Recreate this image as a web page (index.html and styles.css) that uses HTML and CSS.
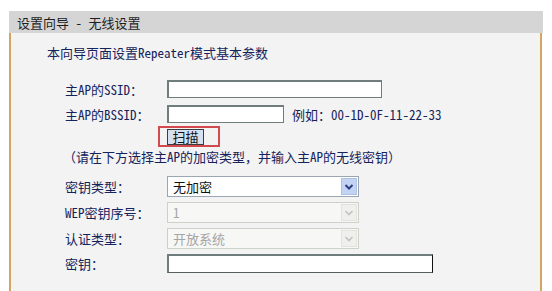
FILE: index.html
```html
<!DOCTYPE html>
<html lang="zh-CN">
<head>
    <meta charset="UTF-8">
    <meta name="viewport" content="width=device-width, initial-scale=1.0">
    <title>设置向导 - 无线设置</title>
    <link rel="stylesheet" href="styles.css">
</head>
<body>
    <div class="panel">
        <div class="panel-title">设置向导 - 无线设置</div>
        <div class="panel-body">
            <p class="intro">本向导页面设置Repeater模式基本参数</p>

            <div class="row row-input first">
                <span class="label">主AP的SSID：</span>
                <input type="text" class="text-input wide">
            </div>
            <div class="row row-input">
                <span class="label">主AP的BSSID：</span>
                <input type="text" class="text-input short">
                <span class="hint">例如：00-1D-0F-11-22-33</span>
            </div>
            <div class="row row-btn">
                <span class="label"></span>
                <span class="highlight"><button class="scan-btn">扫描</button></span>
            </div>

            <p class="note">（请在下方选择主AP的加密类型，并输入主AP的无线密钥）</p>

            <div class="row row-select first-select">
                <span class="label">密钥类型：</span>
                <div class="select">
                    <span class="select-value">无加密</span>
                    <span class="select-arrow">
                        <svg width="10" height="8" viewBox="0 0 10 8"><path d="M1.5 2 L5 5.5 L8.5 2" fill="none" stroke="currentColor" stroke-width="2"/></svg>
                    </span>
                </div>
            </div>
            <div class="row row-select">
                <span class="label">WEP密钥序号：</span>
                <div class="select disabled">
                    <span class="select-value">1</span>
                    <span class="select-arrow">
                        <svg width="10" height="8" viewBox="0 0 10 8"><path d="M1.5 2 L5 5.5 L8.5 2" fill="none" stroke="currentColor" stroke-width="1.6"/></svg>
                    </span>
                </div>
            </div>
            <div class="row row-select">
                <span class="label">认证类型：</span>
                <div class="select disabled">
                    <span class="select-value">开放系统</span>
                    <span class="select-arrow">
                        <svg width="10" height="8" viewBox="0 0 10 8"><path d="M1.5 2 L5 5.5 L8.5 2" fill="none" stroke="currentColor" stroke-width="1.6"/></svg>
                    </span>
                </div>
            </div>
            <div class="row row-key">
                <span class="label">密钥：</span>
                <input type="text" class="text-input key">
            </div>
        </div>
    </div>
</body>
</html>
```

FILE: styles.css
```css
body {
    margin: 0;
    background: #ffffff;
    font-family: "Noto Sans Mono CJK SC", "Noto Sans CJK SC", sans-serif;
    font-size: 13px;
    color: #15235c;
}
.panel {
    margin: 11px 9px 0 9px;
}
.panel-title {
    height: 22px;
    line-height: 23px;
    padding-left: 8px;
    background: #d5d5d5;
    color: #1e1e1e;
}
.panel-body {
    height: 258px;
    box-sizing: border-box;
    margin-right: 1px;
    background: #f3f3f3;
    border-left: 2px solid #d2a662;
    border-right: 2px solid #d2a662;
    padding-top: 10px;
}
.intro {
    margin: 0;
    padding-left: 36px;
    height: 20px;
    line-height: 20px;
}
.row {
    display: flex;
    align-items: center;
    padding-left: 54px;
}
.label {
    width: 102px;
    flex-shrink: 0;
    white-space: nowrap;
}
.row-input {
    height: 22px;
    margin-top: 3px;
}
.row-input.first {
    margin-top: 15px;
}
.text-input {
    box-sizing: border-box;
    height: 18px;
    margin: 0;
    padding: 0 3px;
    background: #ffffff;
    border: 1px solid #6f7e7c;
    border-top-width: 2px;
    border-left-width: 2px;
    font: inherit;
    outline: none;
}
.text-input.wide {
    width: 215px;
}
.text-input.short {
    width: 117px;
}
.text-input.key {
    width: 266px;
    height: 19px;
    border-right-color: #111111;
    border-bottom-color: #555f5e;
}
.hint {
    margin-left: 8px;
    white-space: nowrap;
}
.row-btn {
    height: 21px;
    margin-top: 1px;
}
.highlight {
    display: flex;
    box-sizing: border-box;
    width: 62px;
    height: 21px;
    margin-left: -9px;
    padding: 1px 0 0 7px;
    border: 2px solid #d24a4e;
}
.scan-btn {
    box-sizing: border-box;
    width: 37px;
    height: 16px;
    margin: 0;
    padding: 0;
    border: 1px solid #3c3c3c;
    background: #d5e1f1;
    color: #111111;
    font: inherit;
    line-height: 14px;
}
.note {
    margin: 0;
    padding-left: 52px;
    height: 20px;
    line-height: 20px;
}
.row-select {
    height: 21px;
    margin-top: 5px;
}
.row-select.first-select {
    margin-top: 9px;
}
.select {
    box-sizing: border-box;
    width: 192px;
    height: 21px;
    display: flex;
    align-items: center;
    justify-content: space-between;
    background: #ffffff;
    border: 1px solid #9ba6b3;
    padding: 0 1px 0 5px;
}
.select-value {
    color: #111111;
}
.select-arrow {
    box-sizing: border-box;
    width: 16px;
    height: 17px;
    display: flex;
    align-items: center;
    justify-content: center;
    background: #c3d3f3;
    border: 1px solid #b0c1e6;
    color: #2b4184;
}
.select.disabled {
    background: #f7f7f5;
    border-color: #cdd2c8;
}
.select.disabled .select-value {
    color: #a5a5a5;
}
.select.disabled .select-arrow {
    background: #efefec;
    border-color: #e2e2de;
    color: #c3c3c3;
}
.row-key {
    height: 19px;
    margin-top: 5px;
}
```
